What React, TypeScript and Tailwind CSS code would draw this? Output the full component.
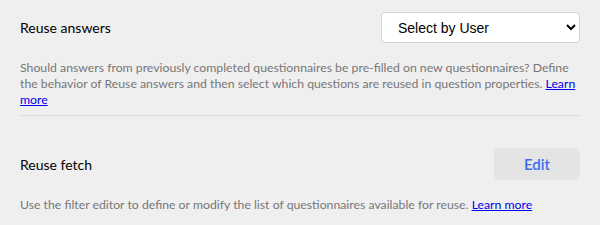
import React, { useState } from 'react';

export default function App() {
  const [reuse, setReuse] = useState('user');

  return (
    <div className="min-h-[225px] w-[600px] bg-[#efefef] px-5 font-['Lato',sans-serif]">
      {/* Reuse answers */}
      <div className="border-b border-[#dcdcdc] pt-3 pb-[7px]">
        <div className="flex items-center justify-between">
          <span className="text-[14px] text-black">Reuse answers</span>
          <select
            value={reuse}
            onChange={e => setReuse(e.target.value)}
            className="h-[31px] w-[199px] rounded-[4px] border border-[#d4d4d4] bg-white pl-[12px] pr-1 font-['Liberation_Sans',sans-serif] text-[14px] text-black"
          >
            <option value="user">Select by User</option>
            <option value="always">Always</option>
            <option value="never">Never</option>
          </select>
        </div>
        <p className="mt-[17px] text-[12.25px] leading-[16px] text-[#777777]">
          Should answers from previously completed questionnaires be pre-filled on new questionnaires? Define the behavior of Reuse answers and then select which questions are reused in question properties.{' '}
          <a href="#" className="text-[#0000ee] underline">Learn more</a>
        </p>
      </div>

      {/* Reuse fetch */}
      <div className="pt-[32px]">
        <div className="flex items-center justify-between">
          <span className="text-[14px] text-black">Reuse fetch</span>
          <button className="h-[32px] w-[86px] rounded-[5px] bg-[#e4e4e4] text-[15px] font-semibold text-[#3b6cf0]">
            Edit
          </button>
        </div>
        <p className="mt-[17px] text-[12.25px] leading-[16px] text-[#777777]">
          Use the filter editor to define or modify the list of questionnaires available for reuse.{' '}
          <a href="#" className="text-[#0000ee] underline">Learn more</a>
        </p>
      </div>
    </div>
  );
}
